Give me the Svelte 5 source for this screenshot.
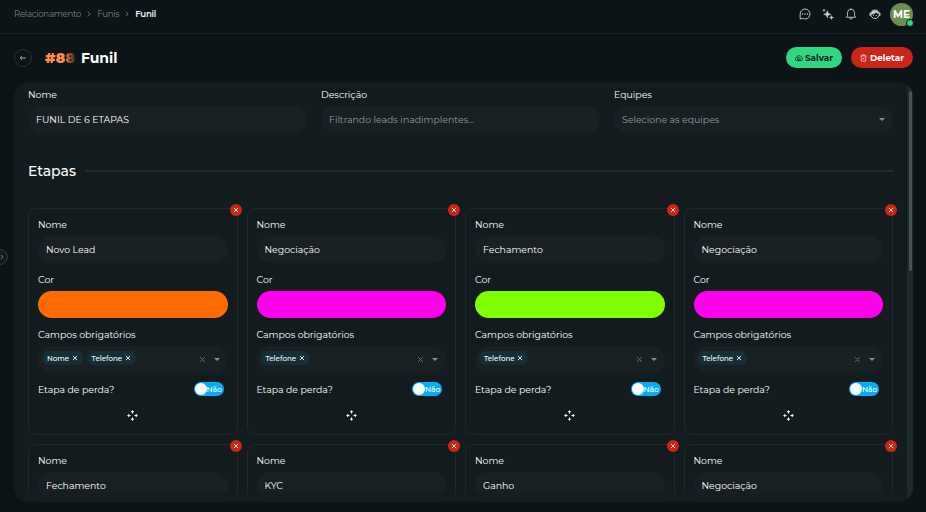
<script lang="ts">
	interface Stage {
		name: string;
		color?: string;
		required?: string[];
	}

	const crumbs = ['Relacionamento', 'Funis', 'Funil'];

	let funnelName = $state('FUNIL DE 6 ETAPAS');
	let description = $state('');

	let stages = $state<Stage[]>([
		{ name: 'Novo Lead', color: '#ff6b00', required: ['Nome', 'Telefone'] },
		{ name: 'Negociação', color: '#ff00ea', required: ['Telefone'] },
		{ name: 'Fechamento', color: '#80ff00', required: ['Telefone'] },
		{ name: 'Negociação', color: '#ff00ea', required: ['Telefone'] },
		{ name: 'Fechamento' },
		{ name: 'KYC' },
		{ name: 'Ganho' },
		{ name: 'Negociação' }
	]);

	function removeStage(index: number) {
		stages.splice(index, 1);
	}
</script>

{#snippet cross(size: number)}
	<svg width={size} height={size} viewBox="0 0 10 10" fill="none" stroke="currentColor" stroke-width="1.4">
		<path d="M1.5 1.5l7 7M8.5 1.5l-7 7" />
	</svg>
{/snippet}

<div class="page">
	<header class="topbar">
		<nav class="crumbs">
			{#each crumbs as crumb, i}
				{#if i > 0}
					<svg width="4" height="6" viewBox="0 0 4 6" fill="none" stroke="currentColor" stroke-width="0.8">
						<path d="M.7.6L3.2 3 .7 5.4" />
					</svg>
				{/if}
				<span class="crumb" class:active={i === crumbs.length - 1}>{crumb}</span>
			{/each}
		</nav>

		<div class="actions">
			<svg width="12" height="12" viewBox="0 0 24 24" fill="none" stroke="currentColor" stroke-width="1.9">
				<path d="M12 2a10 10 0 1 1-4.7 18.8L2.3 22V12A10 10 0 0 1 12 2z" />
				<path d="M7 12h.1M12 12h.1M17 12h.1" stroke-width="3" stroke-linecap="round" />
			</svg>
			<svg width="12" height="12" viewBox="0 0 24 24" fill="currentColor">
				<path d="M10.5 4l2.3 6 6.2 2.5-6.2 2.5-2.3 6-2.3-6L2 12.5 8.2 10z" />
				<path d="M4 1l1.2 2.3L7.500 4.500 5.200 5.700 4 8 2.800 5.700.5 4.500l2.300-1.200zM19 14l1.500 3.500L24 19l-3.500 1.500L19 24l-1.500-3.500L14 19l3.500-1.500z" />
			</svg>
			<svg width="12" height="12" viewBox="0 0 24 24" fill="none" stroke="currentColor" stroke-width="1.8">
				<path d="M12 2.5a7 7 0 0 0-7 7V15l-2.5 3.5h19L19 15V9.5a7 7 0 0 0-7-7zM12 .5v2M9 19a3 3 0 0 0 6 0" />
			</svg>
			<svg width="12" height="12" viewBox="0 0 24 24" fill="none" stroke="currentColor" stroke-width="2">
				<circle cx="12" cy="12.5" r="8.5" />
				<path d="M2.500 10.500v4M21.500 10.500v4" stroke-width="3" stroke-linecap="round" />
				<path d="M9 15h.1M15 15h.1" stroke-width="2.4" stroke-linecap="round" />
				<path d="M4 11c1-9 15-9 16 0-3 1-5 0-6-2-2 3-5 4-10 4z" fill="currentColor" stroke="none" />
			</svg>
			<div class="avatar">ME<span class="status"></span></div>
		</div>
	</header>

	<div class="title-row">
		<button class="back" aria-label="Voltar">
			<svg width="8" height="8" viewBox="0 0 8 8" fill="none" stroke="currentColor" stroke-width="0.9">
				<path d="M7 4H1.200M3.100 2.200L1.200 4l1.900 1.800" />
			</svg>
		</button>
		<h1><span class="id">#88</span><span class="heading">Funil</span></h1>
		<button class="btn save">
			<svg width="8" height="8" viewBox="0 0 24 24" fill="none" stroke="currentColor" stroke-width="2.2">
				<path d="M7 20H6a5 5 0 0 1-.5-10A7 7 0 0 1 19 10a5 5 0 0 1-1 10h-1" />
				<path d="M8 11.5h6l2 2V20H8zM10.5 20v-4h3v4" />
			</svg>
			<span>Salvar</span>
		</button>
		<button class="btn delete">
			<svg width="7" height="8" viewBox="0 0 22 24" fill="none" stroke="currentColor" stroke-width="1.9">
				<path d="M1 5.5h20M7 5V2h8v3M3.5 6l1 16h13l1-16M8.5 11l5 6M13.5 11l-5 6" />
			</svg>
			<span>Deletar</span>
		</button>
	</div>

	<main class="panel">
		<div class="content">
			<div class="fields">
				<label class="field">
					<span class="label">Nome</span>
					<input class="control" bind:value={funnelName} />
				</label>
				<label class="field">
					<span class="label">Descrição</span>
					<input class="control" placeholder="Filtrando leads inadimplentes..." bind:value={description} />
				</label>
				<div class="field">
					<span class="label">Equipes</span>
					<div class="control select">
						<span class="placeholder">Selecione as equipes</span>
						<span class="caret"></span>
					</div>
				</div>
			</div>

			<div class="section">
				<h2>Etapas</h2>
				<hr />
			</div>

			<div class="stages">
				{#each stages as stage, i}
					<section class="card">
						<button class="remove" aria-label="Remover etapa" onclick={() => removeStage(i)}>
							{@render cross(6)}
						</button>
						<label class="field">
							<span class="label">Nome</span>
							<input class="control" bind:value={stage.name} />
						</label>
						{#if stage.required}
							<div class="field">
								<span class="label">Cor</span>
								<div class="swatch" style="background: {stage.color}"></div>
							</div>
							<div class="field">
								<span class="label">Campos obrigatórios</span>
								<div class="control tags">
									{#each stage.required as tag}
										<span class="tag"><span>{tag}</span>{@render cross(6)}</span>
									{/each}
									<span class="clear">{@render cross(7)}</span>
									<span class="caret"></span>
								</div>
							</div>
							<div class="loss">
								<span class="label">Etapa de perda?</span>
								<div class="toggle"><span class="knob"></span><span class="toggle-text">Não</span></div>
							</div>
							<svg class="move" width="11" height="11" viewBox="0 0 11 11" fill="none" stroke="currentColor" stroke-width="1">
								<path d="M4 2.200L5.500.8 7 2.200M4 8.800l1.500 1.400L7 8.800M2.200 4L.8 5.500 2.200 7M8.800 4l1.400 1.500L8.800 7" />
								<path d="M5.500 1v2.500M5.500 7.500V10M1 5.500h2.500M7.500 5.500H10" />
							</svg>
						{/if}
					</section>
				{/each}
			</div>
		</div>
		<div class="track"><div class="thumb"></div></div>
		<div class="fade"></div>
	</main>

	<!-- sidebar handle -->
	<button class="expand" aria-label="Expandir menu">
		<svg width="4" height="6" viewBox="0 0 5 7" fill="none" stroke="currentColor" stroke-width="1.2">
			<path d="M1 1l2.6 2.5L1 6" />
		</svg>
	</button>
</div>

<style>
	:global(body) {
		background: #0c1417;
	}

	* {
		box-sizing: border-box;
	}

	.page {
		position: relative;
		display: flex;
		flex-direction: column;
		width: 926px;
		height: 512px;
		padding-bottom: 10px;
		overflow: hidden;
		background: #0c1417;
		color: #fff;
		font-family: Montserrat, Inter, sans-serif;
		font-size: 9.35px;
	}

	svg {
		display: block;
		flex: none;
	}

	button {
		display: flex;
		align-items: center;
		justify-content: center;
		padding: 0;
		border: none;
		color: inherit;
		font-family: inherit;
	}

	/* Top bar */
	.topbar {
		display: flex;
		align-items: center;
		justify-content: space-between;
		height: 34px;
		padding: 0 13px 5px 14px;
		border-bottom: 1px solid #182124;
	}

	.crumbs {
		display: flex;
		align-items: center;
		gap: 6px;
		color: #7a8083;
	}

	.crumb {
		font-size: 8.6px;
		letter-spacing: -0.27px;
	}
	.crumb.active {
		color: #f0f2f2;
		font-weight: 600;
	}

	.actions {
		display: flex;
		align-items: center;
		gap: 11.3px;
		color: #c3c8ca;
	}

	.avatar {
		position: relative;
		display: flex;
		align-items: center;
		justify-content: center;
		width: 23px;
		height: 23px;
		margin-left: -2px;
		border-radius: 50%;
		background: #6d8e50;
		color: #fff;
		font-size: 10.5px;
		font-weight: 700;
	}

	.status {
		position: absolute;
		right: -1px;
		bottom: -1px;
		width: 8px;
		height: 8px;
		border: 1px solid #0c1417;
		border-radius: 50%;
		background: #2fd781;
	}

	/* Title */
	.title-row {
		display: flex;
		align-items: center;
		height: 48px;
		padding: 0 13px 1px 14px;
	}

	.back {
		width: 18px;
		height: 18px;
		border: 1px solid #273033;
		border-radius: 50%;
		background: transparent;
		color: #b4babc;
	}

	h1 {
		display: flex;
		gap: 5px;
		margin: 0 auto 0 13px;
		font-size: 14px;
		line-height: 18px;
	}

	.id {
		width: 31px;
		background: linear-gradient(90deg, #ff8b4a 58%, #302622 100%);
		background-clip: text;
		color: transparent;
		font-size: 14.5px;
		font-weight: 900;
	}

	.heading {
		font-weight: 700;
		color: #fff;
	}

	.btn {
		gap: 2px;
		height: 21px;
		border-radius: 11px;
		font-size: 8.8px;
		font-weight: 700;
	}
	.save {
		width: 56px;
		background: #2fd781;
		color: #0c2519;
	}
	.delete {
		gap: 3px;
		width: 62px;
		margin-left: 9px;
		background: #cb2418;
		color: #fff;
	}

	/* Panel */
	.panel {
		position: relative;
		display: flex;
		flex: 1;
		min-height: 0;
		margin: 0 13px 0 14px;
		overflow: hidden;
		border-radius: 14px;
		background: #121b1e;
	}

	.content {
		flex: 1;
		padding: 5px 14px 0;
		height: 420px;
		overflow: hidden;
	}

	.track {
		width: 6px;
		padding: 9px 1px 0 2px;
		background: #20282b;
	}
	.thumb {
		height: 180px;
		border-radius: 2px;
		background: #4b5255;
	}

	.fade {
		position: absolute;
		inset: auto 6px 0 0;
		height: 12px;
		background: linear-gradient(transparent, #121b1e 80%);
	}

	.fields {
		display: grid;
		grid-template-columns: repeat(3, 1fr);
		gap: 14px;
	}

	.field {
		display: flex;
		flex-direction: column;
		gap: 4px;
	}

	.label {
		height: 15px;
		line-height: 15px;
	}

	.control {
		width: 100%;
		height: 27px;
		padding: 0 8px;
		border: none;
		border-radius: 14px;
		outline: none;
		background: #192023;
		color: #fff;
		font-family: inherit;
		font-size: 9.35px;
	}
	.control::placeholder,
	.placeholder {
		color: #93999c;
		opacity: 1;
	}

	.select,
	.tags {
		display: flex;
		align-items: center;
	}
	.select {
		justify-content: space-between;
	}

	.caret {
		border: 3px solid transparent;
		border-top-color: #8a9093;
		border-bottom: none;
	}

	.section {
		display: flex;
		align-items: center;
		gap: 9px;
		height: 20px;
		margin-top: 28px;
	}

	h2 {
		margin: 0;
		font-size: 14px;
		font-weight: 500;
	}

	hr {
		flex: 1;
		height: 2px;
		margin: 0;
		border: none;
		background: #232b2e;
	}

	/* Stage cards */
	.stages {
		display: grid;
		grid-template-columns: repeat(4, 1fr);
		gap: 9px;
		margin-top: 27px;
	}

	.card {
		position: relative;
		display: flex;
		flex-direction: column;
		gap: 9px;
		height: 227px;
		padding: 8px 9px 0;
		border: 1px solid #20282b;
		border-radius: 8px;
	}

	.remove {
		position: absolute;
		top: -5px;
		right: -5px;
		width: 12px;
		height: 12px;
		border-radius: 50%;
		background: #cb2418;
		color: #fff;
	}

	.swatch {
		height: 27px;
		border-radius: 14px;
	}

	.tags {
		gap: 4px;
		padding: 0 8px 0 4px;
	}

	.tag {
		display: flex;
		align-items: center;
		gap: 2.5px;
		height: 14px;
		margin-bottom: 3px;
		padding: 0 5px;
		border-radius: 7px;
		background: #152f39;
		font-size: 7.1px;
		font-weight: 500;
	}

	.clear {
		margin-left: auto;
		margin-right: 4px;
		color: #666d70;
	}

	.loss {
		display: flex;
		align-items: center;
		justify-content: space-between;
		height: 14px;
		padding-right: 4px;
	}

	.toggle {
		display: flex;
		align-items: center;
		width: 30px;
		height: 14px;
		padding-left: 1px;
		border-radius: 7px;
		background: #08adf0;
	}
	.knob {
		width: 12px;
		height: 12px;
		flex: none;
		border-radius: 50%;
		background: #fff;
	}
	.toggle-text {
		color: #fff;
		font-size: 7.5px;
		font-weight: 500;
	}

	.move {
		margin: 5px auto 0;
	}

	.expand {
		position: absolute;
		top: 249px;
		left: -8px;
		width: 16px;
		height: 16px;
		padding-left: 4px;
		border: 1px solid #30383b;
		border-radius: 50%;
		background: #131b1e;
		color: #8b9193;
	}
</style>
